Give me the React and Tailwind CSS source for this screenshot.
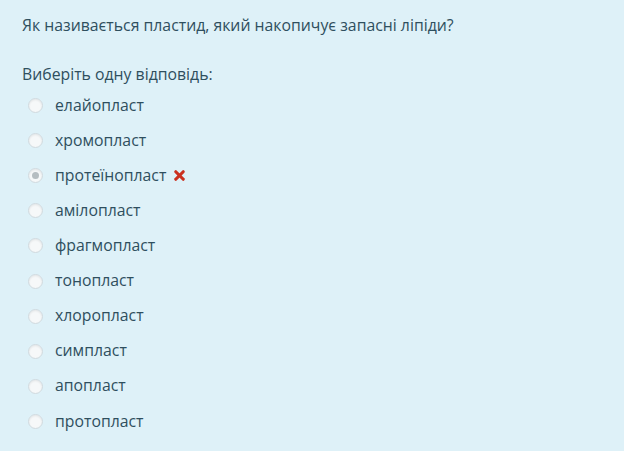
import { X } from 'lucide-react'

const options = [
  'елайопласт',
  'хромопласт',
  'протеїнопласт',
  'амілопласт',
  'фрагмопласт',
  'тонопласт',
  'хлоропласт',
  'симпласт',
  'апопласт',
  'протопласт',
]

const checkedIndex = 2

export default function App() {
  return (
    <div
      className="h-[451px] w-[624px] bg-[#def1f8] text-[15.8px] text-[#2f4f5e]"
      style={{ fontFamily: '"Open Sans", "Noto Sans", sans-serif' }}
    >
      <div className="px-[22px] pt-[13px]">
        <p className="leading-[24px]">Як називається пластид, який накопичує запасні ліпіди?</p>

        <p className="mt-[25px] leading-[24px]">Виберіть одну відповідь:</p>

        <ul className="mt-[2px] pl-[6px]">
          {options.map((label, i) => (
            <li key={label} className="flex h-[35.1px] items-center gap-[12px]">
              <span className="flex h-[15px] w-[15px] items-center justify-center rounded-full border border-[#d0dadf] bg-[#f6f8f9] shadow-[inset_0_1px_2px_rgba(0,0,0,0.08)]">
                {i === checkedIndex && <span className="h-[7px] w-[7px] rounded-full bg-[#b5bdc1]" />}
              </span>
              <span className="flex items-center gap-[6px]">
                {label}
                {i === checkedIndex && <X size={15} strokeWidth={5} className="text-[#ca3120]" />}
              </span>
            </li>
          ))}
        </ul>
      </div>
    </div>
  )
}
